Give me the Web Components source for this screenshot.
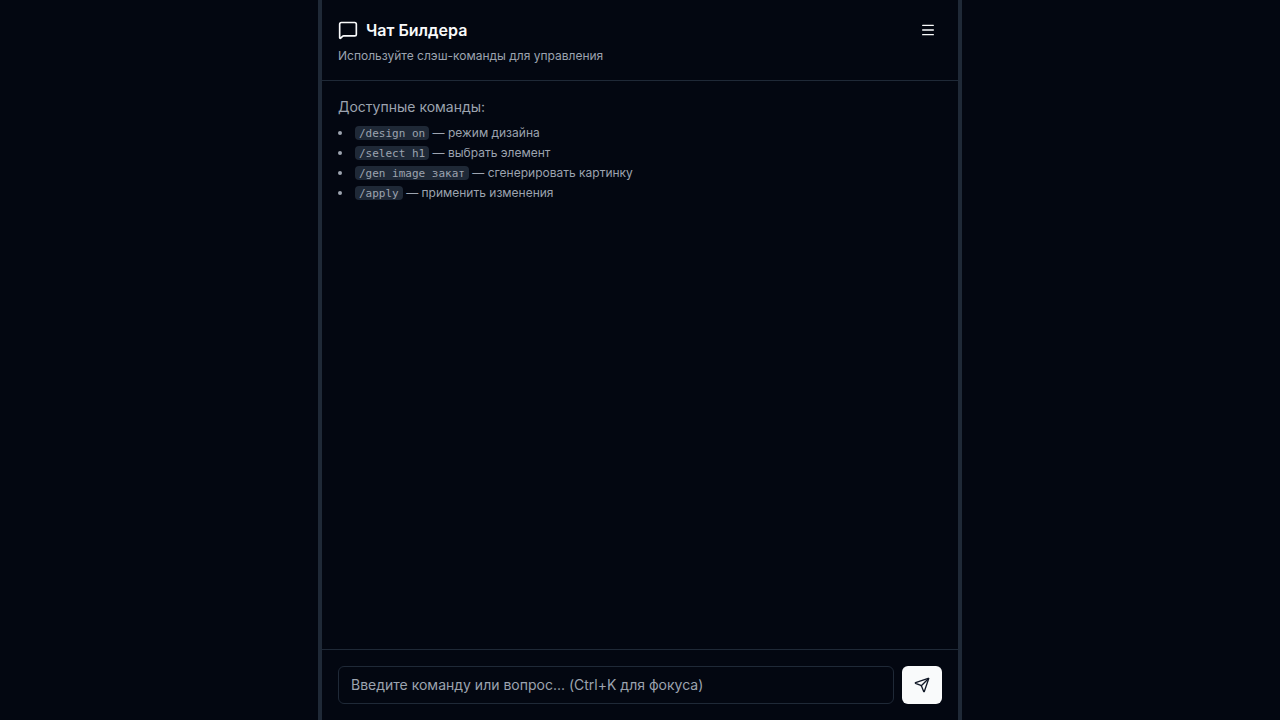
<!DOCTYPE html>
<html lang="ru">
<head>
<meta charset="utf-8">
<meta name="viewport" content="width=device-width, initial-scale=1">
<title>Чат Билдера</title>
<style>
  :root {
    --bg: #030711;
    --line: #1f2937;
    --muted: #9ca3af;
    --fg: #f9fafb;
  }
  body {
    margin: 0;
    background: var(--bg);
    color: var(--fg);
    font-family: Inter, "Liberation Sans", sans-serif;
  }
</style>
</head>
<body>
<builder-layout>
  <chat-panel>
    <chat-header slot="header" heading="Чат Билдера">Используйте слэш-команды для управления</chat-header>
    <command-list heading="Доступные команды:">
      <command-item command="/design on">режим дизайна</command-item>
      <command-item command="/select h1">выбрать элемент</command-item>
      <command-item command="/gen image закат">сгенерировать картинку</command-item>
      <command-item command="/apply">применить изменения</command-item>
    </command-list>
    <chat-composer slot="footer"></chat-composer>
  </chat-panel>
</builder-layout>
<script>
  function define(name, html, setup) {
    const template = document.createElement('template');
    template.innerHTML = html;
    customElements.define(name, class extends HTMLElement {
      constructor() {
        super();
        this.attachShadow({ mode: 'open' }).append(template.content.cloneNode(true));
      }
      connectedCallback() {
        if (setup) setup(this, this.shadowRoot);
      }
    });
  }

  const svgAttrs = 'viewBox="0 0 24 24" fill="none" stroke="currentColor" stroke-width="2" stroke-linecap="round" stroke-linejoin="round" aria-hidden="true"';

  // Three panes separated by resize handles
  define('builder-layout', `
    <style>
      :host { display: grid; grid-template-columns: 1fr 4px 2fr 4px 1fr; min-height: 100vh; }
      .handle { background: var(--line); cursor: col-resize; }
      main { display: grid; min-width: 0; }
    </style>
    <aside></aside>
    <div class="handle"></div>
    <main><slot></slot></main>
    <div class="handle"></div>
    <aside></aside>
  `);

  define('chat-panel', `
    <style>
      :host { display: flex; flex-direction: column; }
      .messages { flex: 1; padding: 16px; }
    </style>
    <slot name="header"></slot>
    <div class="messages"><slot></slot></div>
    <slot name="footer"></slot>
  `);

  define('chat-header', `
    <style>
      :host { display: block; padding: 16px; border-bottom: 1px solid var(--line); }
      .row { display: flex; align-items: center; justify-content: space-between; }
      h1 { display: flex; align-items: center; gap: 8px; margin: 0; font-size: 16px; line-height: 24px; font-weight: 600; }
      button { display: grid; place-items: center; width: 28px; height: 28px; padding: 0; border: 0; border-radius: 6px; background: none; color: inherit; }
      p { margin: 4px 0 0; font-size: 12px; line-height: 16px; color: var(--muted); }
      svg { display: block; }
    </style>
    <div class="row">
      <h1>
        <svg width="20" height="20" ${svgAttrs}><path d="M22 17a2 2 0 0 1-2 2H6.828a2 2 0 0 0-1.414.586l-2.202 2.202A.71.71 0 0 1 2 21.286V5a2 2 0 0 1 2-2h16a2 2 0 0 1 2 2z"/></svg>
        <span></span>
      </h1>
      <button type="button" aria-label="Меню">
        <svg width="16" height="16" ${svgAttrs}><path d="M4 5h16M4 12h16M4 19h16"/></svg>
      </button>
    </div>
    <p><slot></slot></p>
  `, (host, root) => {
    root.querySelector('span').textContent = host.getAttribute('heading');
  });

  define('command-list', `
    <style>
      :host { display: block; color: var(--muted); }
      p { margin: 0 0 8px; font-size: 14px; line-height: 20px; }
      div { display: flex; flex-direction: column; gap: 4px; font-size: 12px; line-height: 16px; }
    </style>
    <p></p>
    <div role="list"><slot></slot></div>
  `, (host, root) => {
    root.querySelector('p').textContent = host.getAttribute('heading');
  });

  define('command-item', `
    <style>
      :host { display: list-item; list-style: disc inside; }
      code { padding: 1px 4px 0; border-radius: 4px; background: var(--line); font-family: "DejaVu Sans Mono", monospace; font-size: 11px; line-height: 12px; }
    </style>
    <code></code> — <slot></slot>
  `, (host, root) => {
    host.setAttribute('role', 'listitem');
    root.querySelector('code').textContent = host.getAttribute('command');
  });

  define('chat-composer', `
    <style>
      :host { display: block; padding: 16px; border-top: 1px solid var(--line); }
      form { display: flex; gap: 8px; }
      input { flex: 1; min-width: 0; box-sizing: border-box; padding: 8px 12px; border: 1px solid var(--line); border-radius: 6px; background: var(--bg); color: var(--fg); font: 14px/20px Inter, "Liberation Sans", sans-serif; outline: 0; }
      input::placeholder { color: var(--muted); }
      button { display: grid; place-items: center; width: 40px; padding: 0; border: 0; border-radius: 6px; background: var(--fg); color: #111827; }
      svg { display: block; }
    </style>
    <form>
      <input type="text" aria-label="Сообщение" placeholder="Введите команду или вопрос... (Ctrl+K для фокуса)">
      <button type="submit" aria-label="Отправить">
        <svg width="16" height="16" ${svgAttrs}><path d="M14.536 21.686a.5.5 0 0 0 .937-.024l6.5-19a.496.496 0 0 0-.635-.635l-19 6.5a.5.5 0 0 0-.024.937l7.93 3.18a2 2 0 0 1 1.112 1.11z"/><path d="m21.854 2.147-10.94 10.939"/></svg>
      </button>
    </form>
  `, (host, root) => {
    root.querySelector('form').addEventListener('submit', event => event.preventDefault());
  });
</script>
</body>
</html>
